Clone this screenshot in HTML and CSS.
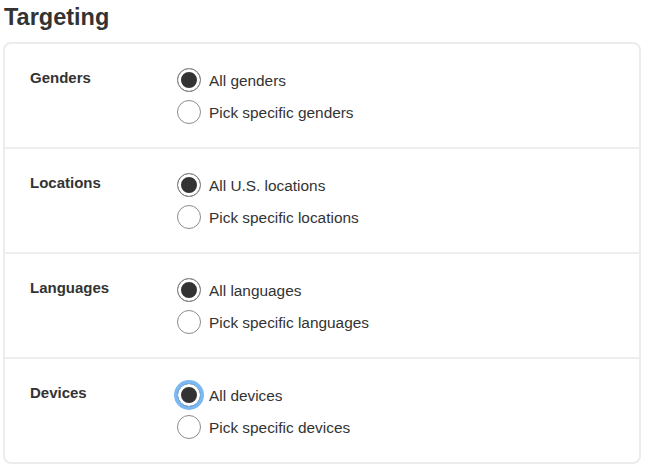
FILE: index.html
```html
<!DOCTYPE html>
<html>
<head>
<meta charset="utf-8">
<link rel="stylesheet" href="styles.css">
</head>
<body>
<div class="page">
  <h1 class="title">Targeting</h1>
  <div class="card">
    <div class="section">
      <div class="label">Genders</div>
      <div class="options">
        <label class="option"><input type="radio" name="g" class="radio" checked><span>All genders</span></label>
        <label class="option"><input type="radio" name="g" class="radio"><span>Pick specific genders</span></label>
      </div>
    </div>
    <div class="section">
      <div class="label">Locations</div>
      <div class="options">
        <label class="option"><input type="radio" name="l" class="radio" checked><span>All U.S. locations</span></label>
        <label class="option"><input type="radio" name="l" class="radio"><span>Pick specific locations</span></label>
      </div>
    </div>
    <div class="section">
      <div class="label">Languages</div>
      <div class="options">
        <label class="option"><input type="radio" name="la" class="radio" checked><span>All languages</span></label>
        <label class="option"><input type="radio" name="la" class="radio"><span>Pick specific languages</span></label>
      </div>
    </div>
    <div class="section">
      <div class="label">Devices</div>
      <div class="options">
        <label class="option"><input type="radio" name="d" class="radio focused" checked><span>All devices</span></label>
        <label class="option"><input type="radio" name="d" class="radio"><span>Pick specific devices</span></label>
      </div>
    </div>
  </div>
</div>
</body>
</html>
```
FILE: styles.css
```css
* { box-sizing: border-box; }
html, body { margin: 0; padding: 0; background: #fff; }
body {
  font-family: "Liberation Sans", Arial, Helvetica, sans-serif;
  color: #333;
}
.page {
  padding: 0 5px 0 3px;
}
.title {
  margin: 0;
  padding: 2px 0 0 1px;
  height: 42px;
  font-size: 23.5px;
  line-height: 30px;
  font-weight: bold;
  color: #333;
}
.card {
  border: 2px solid #ececec;
  border-radius: 8px;
  display: flex;
  flex-direction: column;
}
.section {
  display: grid;
  grid-template-columns: 147px 1fr;
  padding: 24px 24px 23px 25px;
  border-bottom: 2px solid #eeeeee;
}
.section:last-child {
  border-bottom: none;
}
.label {
  font-size: 15px;
  font-weight: bold;
  line-height: 20px;
}
.options {
  display: flex;
  flex-direction: column;
  gap: 8px;
}
.option {
  display: flex;
  align-items: center;
  gap: 8px;
  height: 24px;
  font-size: 15.4px;
  line-height: 24px;
  padding-top: 1px;
}
.radio {
  appearance: none;
  -webkit-appearance: none;
  margin: 0;
  width: 24px;
  height: 24px;
  flex: none;
  border-radius: 50%;
  border: 1px solid #8c8c8c;
  background: #fff;
  position: relative;
  top: -1px;
}
.radio:checked {
  background: #333;
  box-shadow: inset 0 0 0 3px #fff;
}
.radio.focused {
  border-color: #7cb9f2;
  box-shadow: inset 0 0 0 3px #fff, 0 0 0 3px #7cb9f2;
}
```
